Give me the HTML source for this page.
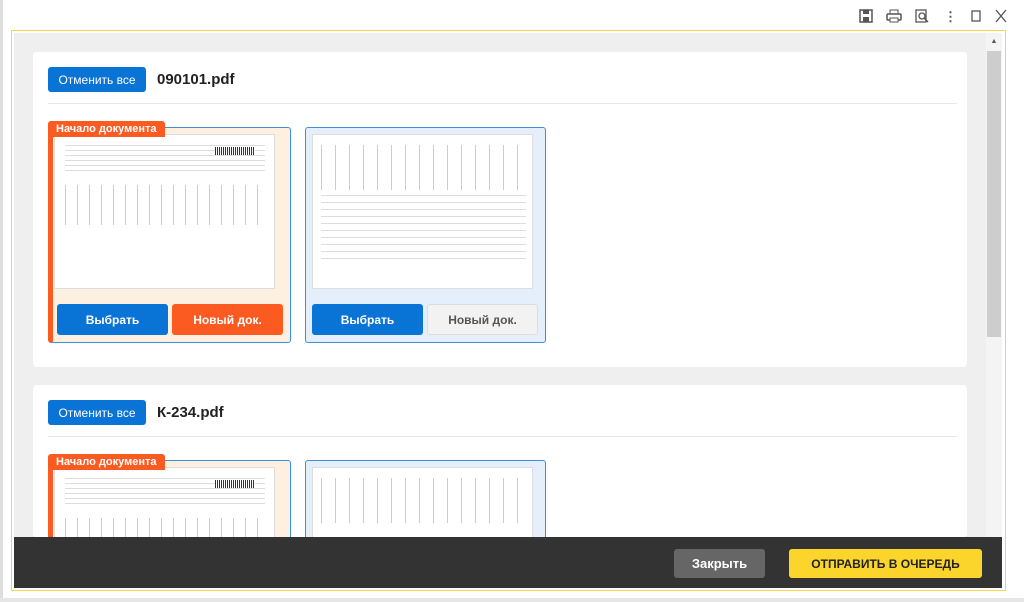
<!DOCTYPE html>
<html><head><meta charset="utf-8"><style>
*{box-sizing:border-box;margin:0;padding:0}
html,body{width:1024px;height:602px;overflow:hidden}
body{background:#fff;font-family:"Liberation Sans",sans-serif;position:relative}
.frame{position:absolute;left:11px;top:30px;width:995px;height:561px;border:1px solid #f5d54a;}
.inner{position:absolute;left:14px;top:33px;width:972px;height:504px;background:#efefef;overflow:hidden}
.sb{position:absolute;left:986px;top:33px;width:16px;height:504px;background:#f4f4f4}
.sb .th{position:absolute;left:1px;top:18px;width:14px;height:286px;background:#cdcdcd}
.panel{position:absolute;left:19px;width:934px;background:#fff;border-radius:3px}
.hdr{position:absolute;left:15px;top:15px;height:25px;display:flex;align-items:center}
.btn{background:#0a74d6;color:#fff;border-radius:3px;font-size:12px;display:flex;align-items:center;justify-content:center}
.hdr .btn{width:98px;height:25px}
.fn{margin-left:11px;font-weight:bold;font-size:15px;color:#222}
.line{position:absolute;left:15px;right:10px;top:51px;height:1px;background:#e8e8e8}
.card{position:absolute;width:241px;height:216px;border:1px solid #3d8fd8;border-radius:3px}
.c1{background:#fdf0e1;border-left:5px solid #fb5a21;width:243px}
.c2{background:#e4effb}
.doc{position:absolute;top:6px;height:155px;background:#fff;border:1px solid #ddd;overflow:hidden}
.c1 .doc{left:1px;width:221px}.c2 .doc{left:6px;width:221px}
.doc i{position:absolute;height:1px;background:#bbb;display:block}
.tag{position:absolute;left:-5px;top:-7px;background:#fb5a21;color:#fff;font-size:11px;font-weight:bold;padding:2px 8px;border-radius:3px 3px 0 0}
.b{position:absolute;top:176px;width:111px;height:31px;border-radius:3px;font-size:12px;font-weight:bold;display:flex;align-items:center;justify-content:center}
.foot{position:absolute;left:14px;top:537px;width:988px;height:51px;background:#333}
</style></head><body>
<div style="position:absolute;left:0;top:0;width:3px;height:602px;background:#ddd"></div>
<div style="position:absolute;left:0;top:598px;width:1024px;height:4px;background:#e6e6e6"></div>
<div style="position:absolute;top:9px;left:859px;display:flex;gap:13px;color:#555;font-size:13px">
<svg width="14" height="14"><rect x="1" y="1" width="12" height="12" fill="none" stroke="#555" stroke-width="1.5"/><rect x="4" y="1" width="6" height="4" fill="#555"/><rect x="4" y="8" width="6" height="5" fill="#555"/></svg>
<svg width="16" height="14"><rect x="4" y="1" width="8" height="4" fill="none" stroke="#555"/><rect x="1" y="5" width="14" height="6" rx="1" fill="none" stroke="#555" stroke-width="1.5"/><rect x="4" y="9" width="8" height="4" fill="#fff" stroke="#555"/></svg>
<svg width="14" height="14"><rect x="1" y="1" width="10" height="12" fill="none" stroke="#555" stroke-width="1.3"/><circle cx="7" cy="7" r="3" fill="none" stroke="#555" stroke-width="1.3"/><path d="M9 9l4 4" stroke="#555" stroke-width="1.5"/></svg>
<span style="font-weight:bold;margin-left:2px">⋮</span>
<svg width="12" height="14"><rect x="2" y="2" width="8" height="10" fill="none" stroke="#555" stroke-width="1.3"/></svg>
<svg width="12" height="14"><path d="M1 1l10 12M11 1L1 13" stroke="#555" stroke-width="1.3"/></svg>
</div>
<div class="frame"></div>
<div class="inner">
 <div class="panel" style="top:19px;height:315px">
  <div class="hdr"><div class="btn">Отменить все</div><div class="fn">090101.pdf</div></div>
  <div class="line"></div>
  <div class="card c1" style="left:15px;top:75px"><div class="doc"><i style="left:10px;top:50px;width:200px;height:40px;background:repeating-linear-gradient(90deg,#ccc 0 1px,#fff 1px 12px);"></i><i style="left:10px;top:10px;width:200px;height:30px;background:repeating-linear-gradient(#ddd 0 1px,#fff 1px 5px)"></i><i style="left:160px;top:12px;width:40px;height:8px;background:repeating-linear-gradient(90deg,#333 0 1px,#fff 1px 2px)"></i></div><div class="tag">Начало документа</div>
   <div class="b" style="left:4px;background:#0a74d6;color:#fff">Выбрать</div><div class="b" style="left:119px;background:#fb5a21;color:#fff">Новый док.</div></div>
  <div class="card c2" style="left:272px;top:75px"><div class="doc"><i style="left:8px;top:10px;width:205px;height:45px;background:repeating-linear-gradient(90deg,#ccc 0 1px,#fff 1px 14px)"></i><i style="left:8px;top:60px;width:205px;height:70px;background:repeating-linear-gradient(#ddd 0 1px,#fff 1px 7px)"></i></div>
   <div class="b" style="left:6px;background:#0a74d6;color:#fff">Выбрать</div><div class="b" style="left:121px;background:#f2f2f2;color:#555;border:1px solid #ddd">Новый док.</div></div>
 </div>
 <div class="panel" style="top:352px;height:152px;overflow:hidden">
  <div class="hdr"><div class="btn">Отменить все</div><div class="fn">К-234.pdf</div></div>
  <div class="line"></div>
  <div class="card c1" style="left:15px;top:75px"><div class="doc"><i style="left:10px;top:50px;width:200px;height:40px;background:repeating-linear-gradient(90deg,#ccc 0 1px,#fff 1px 12px);"></i><i style="left:10px;top:10px;width:200px;height:30px;background:repeating-linear-gradient(#ddd 0 1px,#fff 1px 5px)"></i><i style="left:160px;top:12px;width:40px;height:8px;background:repeating-linear-gradient(90deg,#333 0 1px,#fff 1px 2px)"></i></div><div class="tag">Начало документа</div></div>
  <div class="card c2" style="left:272px;top:75px"><div class="doc"><i style="left:8px;top:10px;width:205px;height:45px;background:repeating-linear-gradient(90deg,#ccc 0 1px,#fff 1px 14px)"></i></div></div>
 </div>
</div>
<div class="sb"><div style="font-size:7px;color:#555;text-align:center;margin-top:5px">▲</div><div class="th"></div></div>
<div class="foot">
 <div style="position:absolute;left:660px;top:12px;width:91px;height:29px;background:#666;border-radius:3px;color:#fff;font-weight:bold;font-size:13px;display:flex;align-items:center;justify-content:center">Закрыть</div>
 <div style="position:absolute;left:775px;top:12px;width:193px;height:29px;background:#fbd52c;border-radius:3px;color:#222;font-weight:bold;font-size:12px;display:flex;align-items:center;justify-content:center">ОТПРАВИТЬ В ОЧЕРЕДЬ</div>
</div>
</body></html>
